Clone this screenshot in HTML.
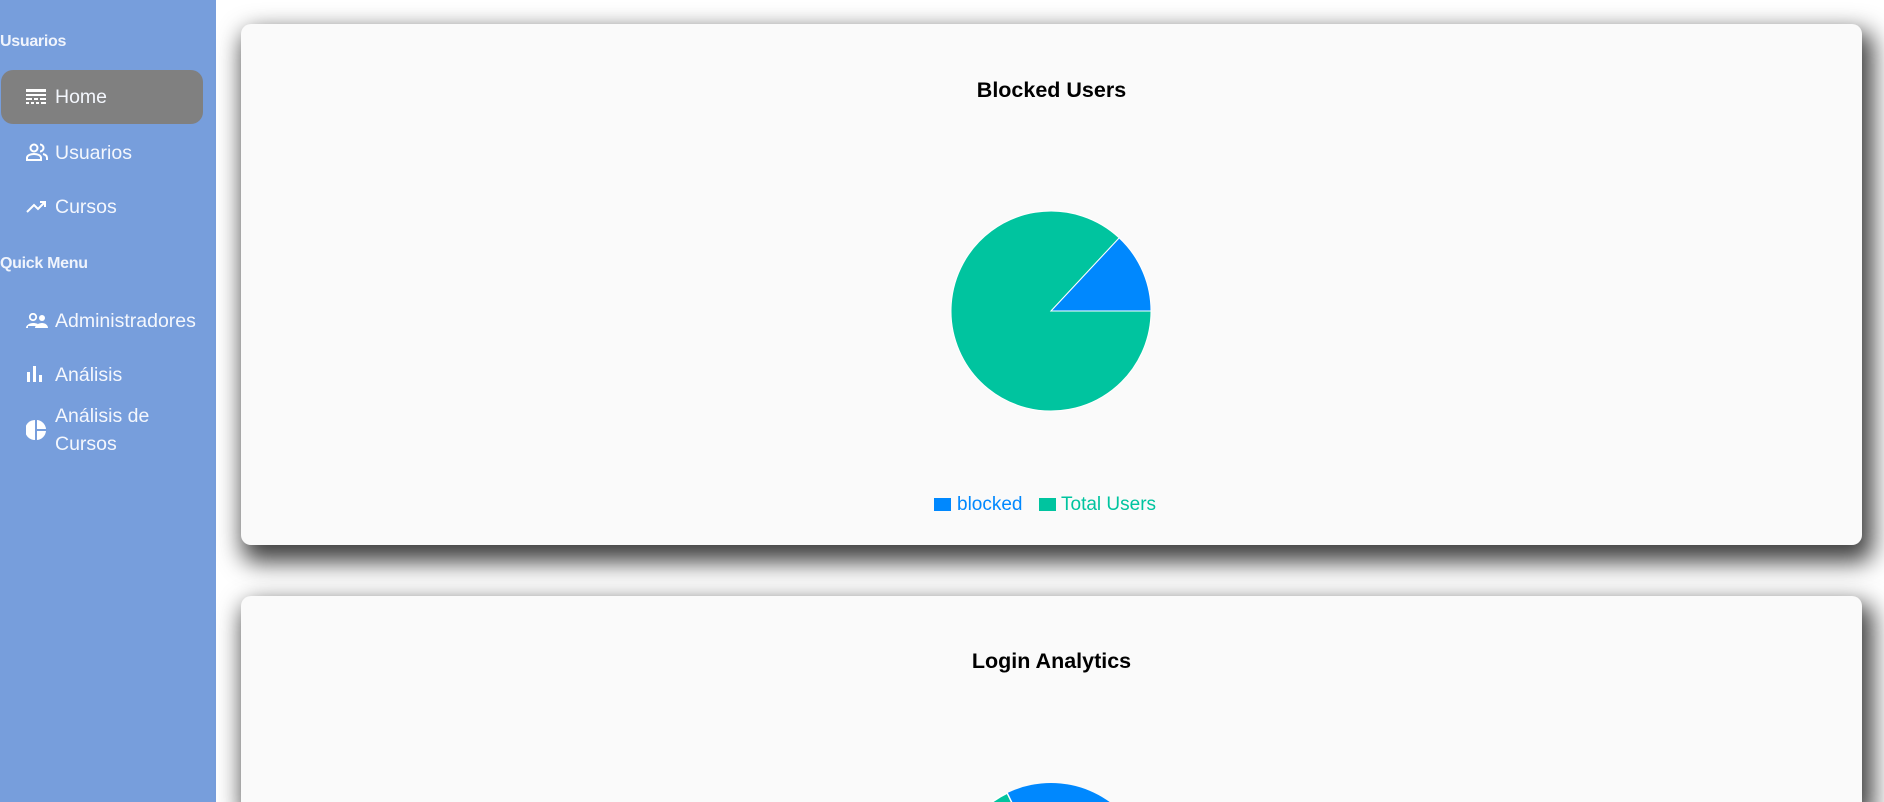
<!DOCTYPE html>
<html><head><meta charset="utf-8"><style>
html,body{margin:0;padding:0;width:1884px;height:802px;overflow:hidden;background:#fff;font-family:"Liberation Sans",sans-serif;position:relative}
.sb{position:absolute;left:0;top:0;width:216px;height:802px;background:#779edc;color:#fff}
.h{position:absolute;left:0;font-weight:bold;font-size:16px;color:#f0f4fc;letter-spacing:-0.3px}
.it{position:absolute;left:55px;font-size:19.5px;color:#f4f7fd}
.ic{position:absolute;left:26px}
.pill{position:absolute;left:1px;top:70px;width:202px;height:54px;background:#808080;border-radius:12px}
.card{position:absolute;left:241px;width:1621px;background:#fafafa;border-radius:10px;box-shadow:6px 12px 24px 5px rgba(0,0,0,0.75)}
.t{position:absolute;width:100%;text-align:center;font-weight:bold;font-size:21.5px;color:#000}
</style></head><body>
<div class="sb">
<div class="h" style="top:33px">Usuarios</div>
<div class="pill"></div>
<svg class="ic" style="top:89px" width="20" height="16" viewBox="0 0 20 16"><g fill="#fff"><rect x="0" y="0" width="20" height="3"/><rect x="0" y="5" width="20" height="2"/><rect x="0" y="9" width="6" height="2"/><rect x="8" y="9" width="4" height="2"/><rect x="14" y="9" width="6" height="2"/><rect x="0" y="13" width="3" height="2"/><rect x="5" y="13" width="3" height="2"/><rect x="10" y="13" width="3" height="2"/><rect x="15" y="13" width="5" height="2"/></g></svg>
<div class="it" style="top:86px">Home</div>
<svg class="ic" style="top:143px" width="22" height="18" viewBox="0 0 22 18"><g fill="none" stroke="#fff" stroke-width="2"><circle cx="8" cy="5" r="3.5"/><path d="M1 17v-2c0-3 4-4 7-4s7 1 7 4v2z"/><path d="M14 1.5a3.5 3.5 0 0 1 0 7M17 11c2 .5 4 1.5 4 4v2"/></g></svg>
<div class="it" style="top:142px">Usuarios</div>
<svg class="ic" style="top:200px" width="22" height="14" viewBox="0 0 22 14"><path d="M1 12l7-7 4 4 7-7M14 2h5v5" fill="none" stroke="#fff" stroke-width="2"/></svg>
<div class="it" style="top:196px">Cursos</div>
<div class="h" style="top:255px">Quick Menu</div>
<svg class="ic" style="top:313px" width="22" height="16" viewBox="0 0 22 16"><g fill="#fff"><circle cx="7" cy="4" r="3.2" fill="none" stroke="#fff" stroke-width="1.8"/><path d="M0 15c0-3 4-5 7-5s5 1 5 1l-2 2H2v2z"/><circle cx="16" cy="5" r="3"/><path d="M9 15c0-3 4-5 7-5s6 2 6 5z"/></g></svg>
<div class="it" style="top:310px">Administradores</div>
<svg class="ic" style="top:366px" width="18" height="16" viewBox="0 0 18 16"><g fill="#fff"><rect x="1" y="6" width="3" height="10"/><rect x="7" y="0" width="3" height="16"/><rect x="13" y="9" width="3" height="7"/></g></svg>
<div class="it" style="top:364px">Análisis</div>
<svg class="ic" style="top:420px" width="20" height="20" viewBox="0 0 20 20"><g fill="#fff"><path d="M9 0v20A10 10 0 0 1 9 0z"/><path d="M11 0a10 10 0 0 1 9 9h-9z"/><path d="M11 11h9a10 10 0 0 1-9 9z"/></g></svg>
<div class="it" style="top:405px">Análisis de</div>
<div class="it" style="top:433px">Cursos</div>
</div>

<div class="card" style="top:24px;height:521px">
<div class="t" style="top:54px;left:0">Blocked Users</div>
</div>
<div class="card" style="top:596px;height:206px;border-bottom-left-radius:0;border-bottom-right-radius:0">
<div class="t" style="top:53px;left:0">Login Analytics</div>
</div>

<svg style="position:absolute;left:0;top:0" width="1884" height="802">
<path d="M1051 311L1119.2 237.9A100 100 0 1 0 1151 311Z" fill="#00c49f" stroke="#fff" stroke-width="1"/>
<path d="M1051 311L1151 311A100 100 0 0 0 1119.2 237.9Z" fill="#0088fe" stroke="#fff" stroke-width="1"/>
<rect x="934" y="498" width="17" height="13" fill="#0088fe"/>
<text x="957" y="510" font-family="Liberation Sans,sans-serif" font-size="19" fill="#0088fe">blocked</text>
<rect x="1039" y="498" width="17" height="13" fill="#00c49f"/>
<text x="1061" y="510" font-family="Liberation Sans,sans-serif" font-size="19" fill="#00c49f">Total Users</text>
<circle cx="1051" cy="883" r="100" fill="#0088fe"/>
<path d="M1051 883L1007.2 793.1A100 100 0 0 0 974.4 818.7Z" fill="#00c49f" stroke="#fff" stroke-width="1.5"/>
</svg>
</body></html>
